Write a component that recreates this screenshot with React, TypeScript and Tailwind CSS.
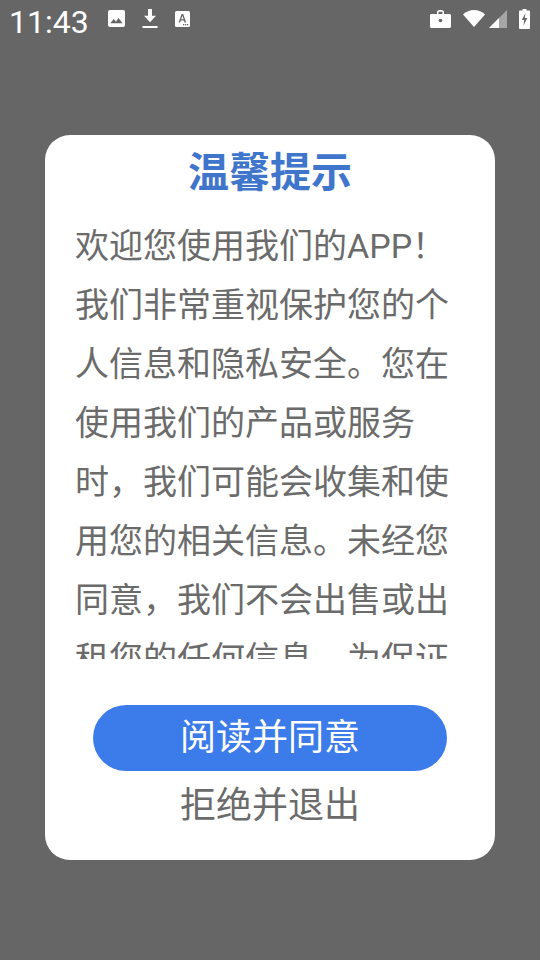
const CJK = "font-['Roboto','Noto_Sans_CJK_SC',sans-serif]";

const lines = [
  "欢迎您使用我们的APP！",
  "我们非常重视保护您的个",
  "人信息和隐私安全。您在",
  "使用我们的产品或服务",
  "时，我们可能会收集和使",
  "用您的相关信息。未经您",
  "同意，我们不会出售或出",
  "租您的任何信息。为保证",
];

function StatusBar() {
  return (
    <div className="flex h-[40px] items-center pl-[9px] pr-[10px] text-white">
      <span className="font-['Roboto',sans-serif] text-[32px] leading-[40px] mt-[4px]">11:43</span>
      <div className="ml-[19px] flex items-center gap-[17px] mb-[3px]">
        <svg width="17" height="17" viewBox="0 0 18 18" aria-hidden="true">
          <rect x="0" y="0" width="18" height="18" rx="2" fill="#fff" />
          <path d="M2.500 14l3.500-4.500 2.500 3 2.500-4 4.500 5.500z" fill="#666" />
        </svg>
        <svg width="16" height="20" viewBox="0 0 16 20" aria-hidden="true">
          <path d="M6 0h4v7h4l-6 7-6-7h4z" transform="scale(1 0.95)" fill="#fff" />
          <rect x="0.500" y="17" width="15" height="2" fill="#fff" />
        </svg>
        <svg width="15" height="16" viewBox="0 0 15 16" aria-hidden="true">
          <rect width="15" height="16" rx="1.500" fill="#fff" />
          <path d="M3.600 11.500L6.600 3h1.600l3 8.500H9.600l-.6-1.900H5.700l-.6 1.900zM6.100 8.300h2.500L7.400 4.700z" fill="#666" />
          <rect x="8" y="13" width="1.300" height="1.300" fill="#666" />
          <rect x="10" y="13" width="1.300" height="1.300" fill="#666" />
          <rect x="12" y="13" width="1.300" height="1.300" fill="#666" />
        </svg>
      </div>
      <div className="ml-auto flex items-center mb-[3px]">
        <svg width="21" height="18" viewBox="0 0 21 18" aria-hidden="true">
          <path d="M1.500 4H7V2.200C7 1 8 0 9.200 0h2.600C13 0 14 1 14 2.200V4h5.500c.8 0 1.500.7 1.500 1.500v11c0 .8-.7 1.500-1.500 1.500h-18C.7 18 0 17.300 0 16.500v-11C0 4.700.7 4 1.500 4zM8.500 4h4V1.800h-4z" fill="#fff" fillRule="evenodd" />
          <circle cx="10.500" cy="10.500" r="1.800" fill="#666" />
        </svg>
        <svg className="ml-[12px]" width="22" height="17" viewBox="0 0 22 17" aria-hidden="true">
          <path d="M0 4.500C3 1.700 6.800 0 11 0s8 1.700 11 4.500L11 17z" fill="#fff" />
        </svg>
        <svg className="ml-[4px]" width="18" height="18" viewBox="0 0 18 18" aria-hidden="true">
          <path d="M18 0v18H0z" fill="#a6a6a6" />
          <path d="M10 8v10H0z" fill="#fff" />
        </svg>
        <svg className="ml-[12px]" width="11" height="20" viewBox="0 0 11 20" aria-hidden="true">
          <path d="M3.500 0h4v1.500h2.500c.5 0 1 .5 1 1V19c0 .5-.5 1-1 1H1c-.5 0-1-.5-1-1V2.500c0-.5.5-1 1-1h2.500z" fill="#fff" />
          <path d="M6.500 4L2.800 11h2.400l-.7 5.500L8.300 9H5.800z" fill="#666" />
        </svg>
      </div>
    </div>
  );
}

export default function App() {
  return (
    <div className={`flex h-[960px] w-[540px] flex-col bg-[#666666] ${CJK}`}>
      <StatusBar />
      <div className="ml-[45px] mt-[95px] flex h-[725px] w-[450px] flex-col items-center rounded-[25px] bg-white">
        <h1 className="mt-[12px] text-[41px] font-bold leading-[52px] text-[#3f76cc]">温馨提示</h1>
        <div className="mt-[6px] h-[454px] w-full overflow-hidden pl-[30px] pr-[20px] pt-[12px]">
          {lines.map((l) => (
            <p key={l} className="whitespace-nowrap text-[34px] leading-[59px] text-[#6b6b6b]">{l}</p>
          ))}
        </div>
        <button className="mt-[46px] flex h-[66px] w-[354px] items-center justify-center rounded-full bg-[#3c7bea] text-[36px] text-white">
          阅读并同意
        </button>
        <button className="mt-[5px] h-[60px] text-[36px] leading-[60px] text-[#6b6b6b]">拒绝并退出</button>
      </div>
    </div>
  );
}
